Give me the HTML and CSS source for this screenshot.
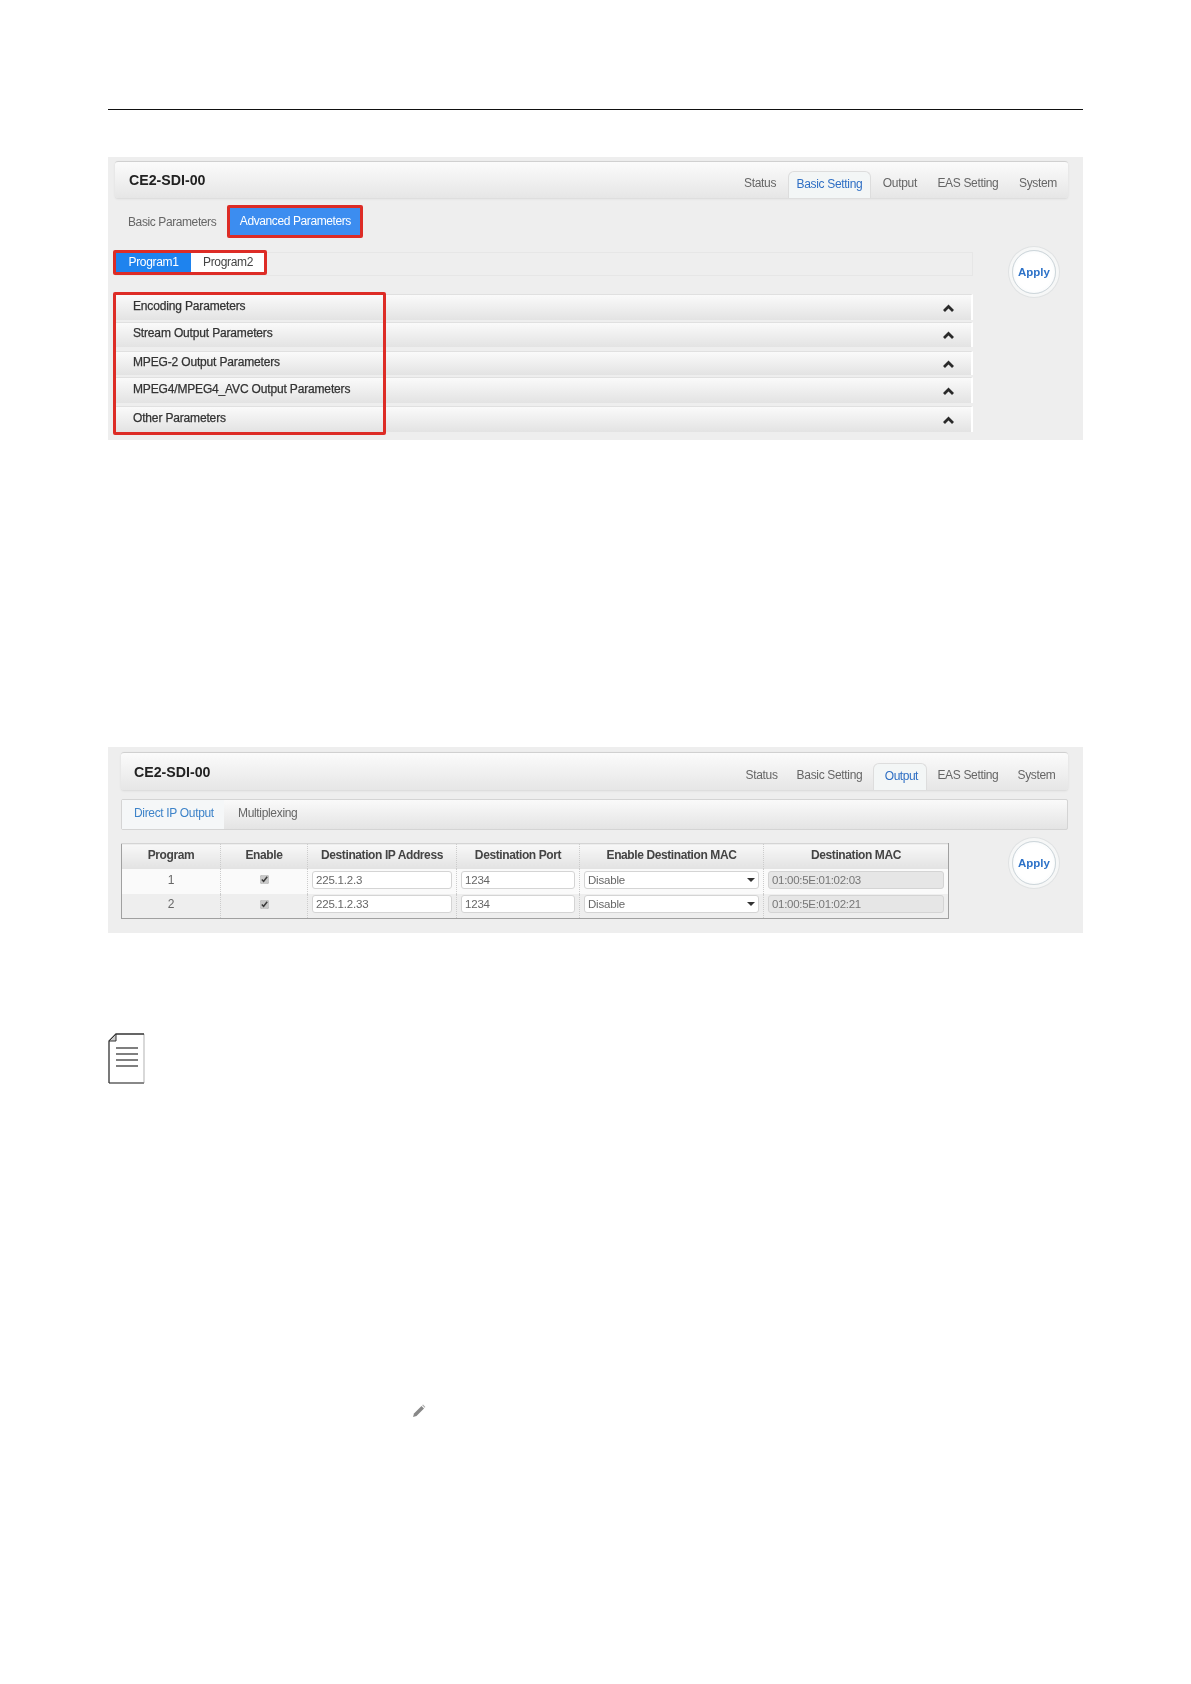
FILE: index.html
```html
<!DOCTYPE html>
<html lang="en">
<head>
<meta charset="utf-8">
<title>CE2-SDI-00</title>
<link rel="stylesheet" href="styles.css">
</head>
<body>
<div class="page">
  <hr class="rule">

  <section class="panel panel-a">
    <header class="topbar">
      <h1 class="device">CE2-SDI-00</h1>
      <nav class="tabs">
        <span class="tab">Status</span>
        <span class="tab active">Basic Setting</span>
        <span class="tab">Output</span>
        <span class="tab">EAS Setting</span>
        <span class="tab">System</span>
      </nav>
    </header>
    <div class="subnav">
      <span class="sub-plain">Basic Parameters</span>
      <span class="sub-primary">Advanced Parameters</span>
    </div>
    <div class="body-a">
      <div class="col-a">
        <div class="program-bar">
          <div class="program-group">
            <span class="prog prog-on">Program1</span>
            <span class="prog">Program2</span>
          </div>
        </div>
        <div class="accordion">
          <div class="acc-row acc-1"><span class="acc-title">Encoding Parameters</span><svg class="chev" viewBox="0 0 11 8"><path d="M1 7 L5.5 2.5 L10 7"/></svg></div>
          <div class="acc-row acc-2"><span class="acc-title">Stream Output Parameters</span><svg class="chev" viewBox="0 0 11 8"><path d="M1 7 L5.5 2.5 L10 7"/></svg></div>
          <div class="acc-row acc-3"><span class="acc-title">MPEG-2 Output Parameters</span><svg class="chev" viewBox="0 0 11 8"><path d="M1 7 L5.5 2.5 L10 7"/></svg></div>
          <div class="acc-row acc-4"><span class="acc-title">MPEG4/MPEG4_AVC Output Parameters</span><svg class="chev" viewBox="0 0 11 8"><path d="M1 7 L5.5 2.5 L10 7"/></svg></div>
          <div class="acc-row acc-5"><span class="acc-title">Other Parameters</span><svg class="chev" viewBox="0 0 11 8"><path d="M1 7 L5.5 2.5 L10 7"/></svg></div>
          <div class="red-box"></div>
        </div>
      </div>
      <button class="apply apply-a" type="button">Apply</button>
    </div>
  </section>

  <section class="panel panel-b">
    <header class="topbar">
      <h1 class="device">CE2-SDI-00</h1>
      <nav class="tabs">
        <span class="tab">Status</span>
        <span class="tab">Basic Setting</span>
        <span class="tab active">Output</span>
        <span class="tab">EAS Setting</span>
        <span class="tab">System</span>
      </nav>
    </header>
    <div class="output-nav">
      <span class="out-tab out-on">Direct IP Output</span>
      <span class="out-tab">Multiplexing</span>
    </div>
    <div class="body-b">
      <table class="grid">
        <colgroup>
          <col class="c1"><col class="c2"><col class="c3"><col class="c4"><col class="c5"><col class="c6">
        </colgroup>
        <thead>
          <tr><th>Program</th><th>Enable</th><th>Destination IP Address</th><th>Destination Port</th><th>Enable Destination MAC</th><th>Destination MAC</th></tr>
        </thead>
        <tbody>
          <tr>
            <td>1</td>
            <td><input class="check" type="checkbox" checked></td>
            <td><input class="field" type="text" value="225.1.2.3"></td>
            <td><input class="field" type="text" value="1234"></td>
            <td><span class="select-wrap"><select class="field picker"><option>Disable</option></select></span></td>
            <td><input class="field locked" type="text" value="01:00:5E:01:02:03" disabled></td>
          </tr>
          <tr class="alt">
            <td>2</td>
            <td><input class="check" type="checkbox" checked></td>
            <td><input class="field" type="text" value="225.1.2.33"></td>
            <td><input class="field" type="text" value="1234"></td>
            <td><span class="select-wrap"><select class="field picker"><option>Disable</option></select></span></td>
            <td><input class="field locked" type="text" value="01:00:5E:01:02:21" disabled></td>
          </tr>
        </tbody>
      </table>
      <button class="apply apply-b" type="button">Apply</button>
    </div>
  </section>

  <svg class="note" viewBox="0 0 37 51">
    <path class="note-page" d="M8 1 H36 V50 H1 V8 Z"/>
    <path class="note-right" d="M36 1 V50"/>
    <path class="note-bottom" d="M1 50 H36"/>
    <path class="note-edge" d="M36 1 H8 L1 8 V50"/>
    <path class="note-fold" d="M8 1 V8 H1 Z"/>
    <path class="note-lines" d="M8 15 H30 M8 21 H30 M8 27 H30 M8 33 H30"/>
  </svg>

  <svg class="pencil" viewBox="0 0 14 14">
    <path d="M1 13 L2 9.5 L9.5 2 L12 4.5 L4.5 12 Z" fill="#888"/>
    <path d="M10.2 1.3 L11 .6 L13.4 3 L12.7 3.8 Z" fill="#aaa"/>
  </svg>
</div>
</body>
</html>
```
FILE: styles.css
```css
* { box-sizing: border-box; }
html, body { margin: 0; padding: 0; background: #fff; }
body { font-family: "Liberation Sans", Arial, sans-serif; font-size: 12px; letter-spacing: -0.33px; color: #555; height: 1684px; overflow: hidden; }
.page { padding: 109px 108px 0 108px; }
.rule { margin: 0; border: 0; border-top: 1px solid #111; height: 1px; }

.panel { background: #eeeeee; filter: blur(0.35px); }
.panel-a { margin-top: 47px; height: 283px; padding: 4px 15px 0 7px; }
.panel-b { margin-top: 307px; height: 186px; padding: 5px 15px 0 13px; }

.topbar {
  display: flex; align-items: flex-end; justify-content: space-between;
  height: 37px; padding: 0 2px 0 14px;
  border-top: 1px solid #d0d0d0;
  border-radius: 3px;
  background: linear-gradient(#fbfbfb, #e6e6e6);
  box-shadow: 0 1px 2px #d8d8d8;
}
.panel-b .topbar { height: 38px; padding: 0 4px 0 13px; }
.device { margin: 0; align-self: center; font-size: 14.2px; letter-spacing: 0; font-weight: bold; color: #222; }
.tabs { display: flex; gap: 2.5px; }
.panel-b .tabs { gap: 2px; }
.tab { display: block; height: 27px; line-height: 25px; padding: 0 9px; color: #666; white-space: nowrap; border-radius: 6px 6px 0 0; }
.panel-b .tab { padding: 0 8.5px; }
.tab.active { background: #f3f6f6; border: 1px solid #dddddd; border-bottom: 0; padding: 0 8px; color: #2f6fc4; }
.panel-b .tab.active { padding: 0 8px 0 11px; letter-spacing: -0.5px; }

.subnav { display: flex; align-items: center; height: 33px; margin-top: 7px; letter-spacing: -0.4px; }
.sub-plain { padding: 0 11px 0 13px; color: #666; white-space: nowrap; }
.sub-primary {
  display: block; height: 33px; line-height: 27px; padding: 0 9.5px;
  background: #3c8df0; border: 3px solid #dd2c26; border-radius: 2px; color: #fff; white-space: nowrap;
}

.body-a { display: flex; align-items: flex-start; }
.col-a { width: 858px; }
.program-bar { height: 24px; margin-top: 14px; border: 1px solid #e6e6e6; background: #eeeeee; }
.program-group {
  display: flex; width: 154px; height: 25px; margin: -3px 0 0 -3px;
  border: 3px solid #dd2c26; border-radius: 2px; background: #fff;
}
.prog { flex: 0 0 74px; line-height: 18px; text-align: center; color: #444; white-space: nowrap; }
.prog-on { flex-basis: 75px; background: #1e83ee; color: #fff; }

.accordion { position: relative; margin-top: 18px; }
.acc-row {
  display: flex; align-items: center; justify-content: space-between;
  padding: 0 17px 4px 18px;
  background: linear-gradient(#fafafa, #e3e3e3);
  border-top: 1px solid #e0e0e0;
  border-right: 2px solid #fff;
  color: #333;
}
.acc-1 { height: 26px; }
.acc-2 { height: 25px; margin-top: 2px; }
.acc-3 { height: 24px; margin-top: 4px; }
.acc-4 { height: 26px; margin-top: 2px; }
.acc-5 { height: 26px; margin-top: 3px; }
.acc-title { font-size: 12px; letter-spacing: -0.16px; -webkit-text-stroke: 0.25px #333; white-space: nowrap; }
.chev { width: 11px; height: 8px; margin-top: 4px; flex: none; }
.chev path { fill: none; stroke: #2a2a2a; stroke-width: 2.8; }
.red-box { position: absolute; left: -2px; top: -2px; width: 273px; height: 143px; border: 3px solid #dd2c26; border-radius: 2px; pointer-events: none; }

.apply {
  display: block; padding: 0; width: 44px; height: 44px; border-radius: 50%;
  font: bold 11.5px "Liberation Sans", Arial, sans-serif; color: #2d72c8;
  background: radial-gradient(circle, #ffffff 60%, #eef3f6 100%);
  border: 1px solid #cdd6db;
  box-shadow: 0 0 0 3px #f6f7f7, 0 0 0 4px #e0e2e3;
}
.apply-a { margin: 12px 0 0 39px; }
.apply-b { margin: -2px 0 0 63px; }

.output-nav {
  display: flex; height: 31px; margin-top: 9px;
  border: 1px solid #d4d4d4; border-radius: 2px;
  background: linear-gradient(#fafafa, #e4e4e4);
}
.out-tab { padding: 0 14px; line-height: 27px; color: #666; white-space: nowrap; }
.out-on { background: #f5f7f8; color: #3d83c9; padding: 0 8px 0 12px; width: 102px; }

.body-b { display: flex; align-items: flex-start; margin-top: 13px; }
.grid { width: 827px; table-layout: fixed; border-collapse: collapse; border: 1px solid #a0a0a0; border-top: 1px solid #d4d4d4; }
.c1 { width: 99px; } .c2 { width: 87px; } .c3 { width: 149px; } .c4 { width: 123px; } .c5 { width: 184px; } .c6 { width: 185px; }
.grid th {
  height: 25px; padding: 0 0 2px; font-weight: bold; letter-spacing: -0.4px; color: #444; text-align: center;
  background: linear-gradient(#f8f8f8, #e2e2e2);
  border-right: 1px dotted #ccc;
}
.grid th:last-child { border-right: 0; }
.grid td { height: 25px; padding: 0 4px 3px; text-align: center; background: #fafafa; border-right: 1px dotted #ccc; color: #666; }
.grid td:last-child { border-right: 0; }
.grid .alt td { background: #eeeeee; }
.field {
  display: block; width: 100%; height: 18px; padding: 0 3px; margin: 0;
  font: 11.5px "Liberation Sans", Arial, sans-serif; letter-spacing: -0.2px; color: #666;
  background: #fff; border: 1px solid #d4d4d4; border-radius: 3px;
}
.picker { appearance: none; -webkit-appearance: none; }
.locked { background: #e6e6e6; color: #777; letter-spacing: -0.3px; }
.select-wrap { position: relative; display: block; }
.select-wrap::after {
  content: ""; position: absolute; right: 4px; top: 7px;
  border-left: 4px solid transparent; border-right: 4px solid transparent; border-top: 4px solid #333;
}
.check { display: block; margin: 0 auto; width: 9px; height: 9px; accent-color: #c8c8c8; }

.note { display: block; width: 37px; height: 51px; margin-top: 100px; }
.note-page { fill: #fff; stroke: none; }
.note-edge { fill: none; stroke: #333; stroke-width: 1.3; }
.note-right { fill: none; stroke: #c4c4c4; stroke-width: 1.3; }
.note-bottom { fill: none; stroke: #888; stroke-width: 2; }
.note-fold { fill: #ccc; stroke: #333; stroke-width: 1; }
.note-lines { fill: none; stroke: #555; stroke-width: 1.5; }

.pencil { display: block; width: 14px; height: 14px; margin: 320px 0 0 304px; filter: blur(0.4px); }
```
